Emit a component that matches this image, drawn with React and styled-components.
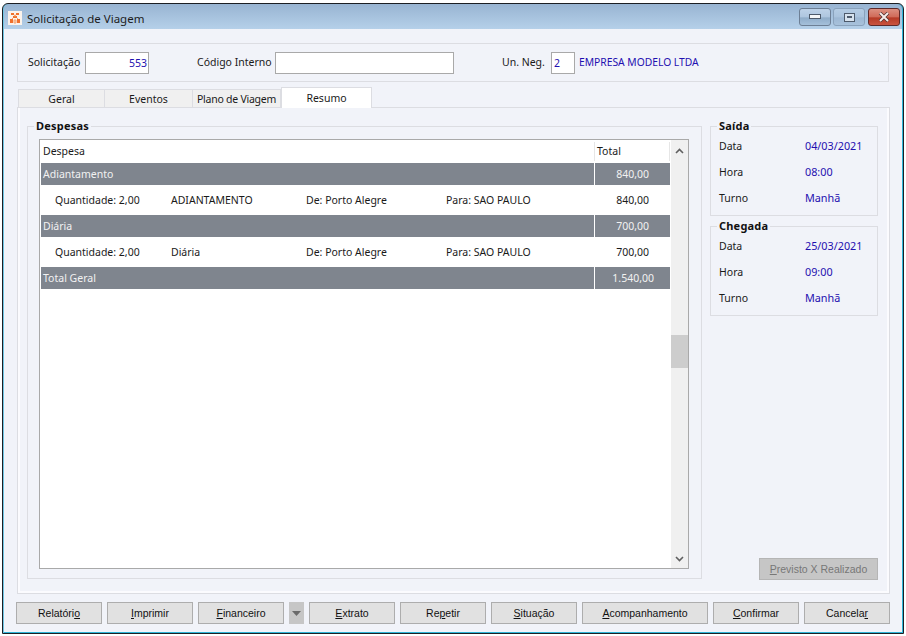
import React from 'react';
import styled, { createGlobalStyle } from 'styled-components';

const GlobalStyle = createGlobalStyle`
  html, body {
    margin: 0;
    padding: 0;
    background: #fff;
  }
  * {
    box-sizing: border-box;
  }
  #root {
    width: 906px;
    height: 636px;
    overflow: hidden;
    font-family: "Noto Sans", "Liberation Sans", sans-serif;
    font-size: 10.5px;
    color: #1a1a1a;
  }
`;

const Window = styled.div`
  width: 902px;
  height: 631px;
  margin: 3px 0 0 2px;
  border: 1px solid #1c1f24;
  border-radius: 6px 6px 0 0;
  background: linear-gradient(#98b4d2 0, #b6d1ea 26px, #bcd8ee 100%);
  padding: 0 1px 1px 1px;
  display: flex;
  flex-direction: column;
  box-shadow: inset 1px 0 0 #6fc6e4, inset -1px 0 0 #30b5d8, inset 0 -1px 0 #30b5d8;
`;

const TitleBar = styled.div`
  height: 25px;
  padding: 3px 2px 0 4px;
  display: flex;
  align-items: center;
  gap: 5px;
`;

const TitleIcon = styled.svg`
  width: 14px;
  height: 14px;
  flex: none;
`;

const TitleText = styled.div`
  font-size: 11.5px;
  color: #1c1c1c;
  flex: 1;
`;

const Controls = styled.div`
  display: flex;
  gap: 2px;
  align-self: flex-start;
  margin-top: 1px;
`;

const ControlButton = styled.div`
  width: 32px;
  height: 18px;
  margin-left: ${({ $close }) => ($close ? 1 : 0)}px;
  border: 1px solid ${({ $close, $soft }) => ($close ? '#5e2a2a' : $soft ? '#8aa2bc' : '#6d7f95')};
  border-radius: 3px;
  display: flex;
  align-items: center;
  justify-content: center;
  background: ${({ $close, $soft }) =>
    $close
      ? 'linear-gradient(#dc8f80 0, #d06a58 50%, #b53a26 55%, #c9533f 100%)'
      : $soft
        ? 'linear-gradient(#b4cce4 0, #aac3dd 50%, #9db8d4 55%, #a8c2dc 100%)'
        : 'linear-gradient(#bdd2e8 0, #aec6df 50%, #8facc9 55%, #a5c0da 100%)'};
`;

const Body = styled.div`
  flex: 1;
  background: #f1f3f9;
  padding: 14px 8px 8px 13px;
  display: flex;
  flex-direction: column;
`;

const HeaderGroup = styled.div`
  width: 872px;
  height: 39px;
  border: 1px solid #dcdde2;
  display: flex;
  align-items: center;
  padding-left: 10px;
`;

const FieldLabel = styled.span`
  width: ${({ $w }) => $w}px;
  margin: 0 0 2px ${({ $gap }) => $gap || 0}px;
  white-space: nowrap;
  flex: none;
`;

const Input = styled.div`
  width: ${({ $w }) => $w}px;
  height: 22px;
  background: #fff;
  border: 1px solid #a9a9a9;
  color: #1f10b0;
  padding: 0 1px 0 2px;
  line-height: 21px;
  text-align: ${({ $align }) => $align || 'left'};
  flex: none;
`;

const CompanyName = styled.span`
  margin: 0 0 2px 4px;
  color: #1f10b0;
  font-size: 10.3px;
`;

const TabRow = styled.div`
  height: 21px;
  margin: 5px 0 -1px 0;
  padding-left: 1px;
  display: flex;
  align-items: flex-start;
  position: relative;
  z-index: 1;
`;

const Tab = styled.div`
  width: ${({ $w }) => $w}px;
  height: ${({ $active }) => ($active ? 21 : 18)}px;
  margin-top: ${({ $active }) => ($active ? 0 : 2)}px;
  background: ${({ $active }) => ($active ? '#fff' : '#f0f0f0')};
  border: 1px solid #dcdde2;
  border-left-width: ${({ $first, $active }) => ($first || $active ? 1 : 0)}px;
  border-bottom-width: 0;
  display: flex;
  align-items: center;
  justify-content: center;
  padding-top: ${({ $active }) => ($active ? 0 : 1)}px;
  letter-spacing: ${({ $tight }) => ($tight ? '-0.25px' : '0')};
  white-space: nowrap;
`;

const TabPanel = styled.div`
  width: 873px;
  height: 487px;
  border: 1px solid #dcdde2;
  padding: 11px 9px 13px 9px;
  display: flex;
  gap: 8px;
  box-shadow: inset 2px 0 0 #fbfbfe, inset -2px 0 0 #fbfbfe, inset 0 -2px 0 #fbfbfe;
`;

const GroupBox = styled.fieldset`
  margin: 0;
  min-width: 0;
  width: ${({ $w }) => $w}px;
  height: ${({ $h }) => $h}px;
  border: 1px solid #dcdde2;
  padding: ${({ $pad }) => $pad};
  flex: none;
`;

const GroupLegend = styled.legend`
  margin-left: ${({ $offset }) => $offset}px;
  padding: 0 2px;
  font-weight: 700;
  font-size: 11px;
  letter-spacing: 0.2px;
  line-height: 14px;
  color: #111;
`;

const Grid = styled.div`
  height: 430px;
  background: #fff;
  border: 1px solid #a9a9a9;
  display: flex;
`;

const GridMain = styled.div`
  flex: 1;
  min-width: 0;
  padding: 0 1px;
`;

const HeaderRow = styled.div`
  height: 23px;
  display: grid;
  grid-template-columns: 553px 1fr;
  align-items: center;
`;

const HeaderCell = styled.div`
  height: 19px;
  line-height: 18px;
  padding-left: ${({ $pad }) => $pad}px;
  border-left: ${({ $sep }) => ($sep ? '1px solid #e6e6e6' : '0')};
  border-right: ${({ $sep }) => ($sep ? '1px solid #e6e6e6' : '0')};
`;

const BandRow = styled.div`
  height: 22px;
  display: grid;
  grid-template-columns: 553px 1px 1fr;
  line-height: 22px;
  color: #f2f2f2;
`;

const BandLabel = styled.div`
  background: #7f858e;
  padding-left: 2px;
`;

const BandDivider = styled.div`
  background: #fff;
`;

const BandValue = styled.div`
  background: #7f858e;
  text-align: right;
  padding-right: ${({ $pad }) => $pad || 21}px;
`;

const DetailRow = styled.div`
  height: 30px;
  display: grid;
  grid-template-columns: 116px 135px 140px 163px 1fr;
  align-items: center;
  padding-left: 14px;
`;

const DetailValue = styled.div`
  text-align: right;
  padding-right: 21px;
`;

const ScrollBar = styled.div`
  width: 17px;
  flex: none;
  background: #f0f0f0;
  display: flex;
  flex-direction: column;
  align-items: center;
`;

const ScrollArrow = styled.svg`
  width: 9px;
  height: 6px;
  margin: ${({ $m }) => $m};
  flex: none;
`;

const ScrollThumb = styled.div`
  width: 17px;
  height: 33px;
  margin-top: 181px;
  background: #cdcdcd;
`;

const ScrollSpacer = styled.div`
  flex: 1;
`;

const SideColumn = styled.div`
  flex: 1;
  display: flex;
  flex-direction: column;
`;

const InfoRow = styled.div`
  height: 26px;
  display: grid;
  grid-template-columns: 86px 1fr;
  align-items: center;
`;

const InfoValue = styled.span`
  color: #1f10b0;
  font-size: 10.8px;
  margin-bottom: 1px;
`;

const Stack = styled.div`
  display: flex;
  flex-direction: column;
  gap: 3px;
`;

const SideButton = styled.div`
  width: 119px;
  height: 22px;
  margin: auto 0 0 49px;
  background: #c6c6c6;
  border: 1px solid #b5b5b5;
  color: #777;
  font-family: "Liberation Sans", sans-serif;
  font-size: 10.5px;
  text-align: center;
  line-height: 20px;
  white-space: nowrap;
`;

const Footer = styled.div`
  margin: 8px 0 0 -1px;
  display: flex;
  gap: 5px;
`;

const ActionButton = styled.div`
  width: ${({ $w }) => $w || 86}px;
  height: 22px;
  background: #e1e1e1;
  border: 1px solid #adadad;
  font-family: "Liberation Sans", sans-serif;
  font-size: 10.5px;
  text-align: center;
  line-height: 20px;
  white-space: nowrap;
  color: #111;
  flex: none;
`;

const DropButton = styled.div`
  width: 15px;
  height: 22px;
  background: #c6c6c6;
  display: flex;
  align-items: center;
  justify-content: center;
  flex: none;
`;

const Key = styled.span`
  text-decoration: underline;
`;

const Triangle = styled.svg`
  width: 9px;
  height: 5px;
`;

const groups = [
  { name: 'Adiantamento', total: '840,00', detail: 'ADIANTAMENTO' },
  { name: 'Diária', total: '700,00', detail: 'Diária' },
];

const schedule = [
  { title: 'Saída', date: '04/03/2021', time: '08:00', shift: 'Manhã' },
  { title: 'Chegada', date: '25/03/2021', time: '09:00', shift: 'Manhã' },
];

const buttons = [
  { pre: 'Relatóri', key: 'o', post: '' },
  { pre: '', key: 'I', post: 'mprimir' },
  { pre: '', key: 'F', post: 'inanceiro' },
  { drop: true },
  { pre: '', key: 'E', post: 'xtrato' },
  { pre: 'Re', key: 'p', post: 'etir' },
  { pre: '', key: 'S', post: 'ituação' },
  { pre: '', key: 'A', post: 'companhamento', w: 126 },
  { pre: '', key: 'C', post: 'onfirmar' },
  { pre: 'Cancela', key: 'r', post: '' },
];

const AppIcon = () => (
  <TitleIcon viewBox="0 0 14 14">
    <rect width="14" height="14" fill="#fbf3ec" />
    <path d="M3 2h3v2H3zM8 2h3v2H8zM5 5h4v2H5zM2 8h3v4H2zM9 8h3v4H9z" fill="#f0702c" />
    <path d="M6 4l2 1M8 4L6 5M5 7L4 8M9 7l1 1M6 9h2v3H6z" stroke="#f6a472" strokeWidth="1" fill="#fbd2b4" />
  </TitleIcon>
);

export default function App() {
  return (
    <>
      <GlobalStyle />
      <Window>
        <TitleBar>
          <AppIcon />
          <TitleText>Solicitação de Viagem</TitleText>
          <Controls>
            <ControlButton>
              <svg width="12" height="6" viewBox="0 0 12 6">
                <rect x="0.5" y="0.5" width="11" height="4" fill="#f4f6f8" stroke="#4d5a6b" />
              </svg>
            </ControlButton>
            <ControlButton $soft>
              <svg width="11" height="9" viewBox="0 0 11 9">
                <rect x="0.5" y="0.5" width="10" height="8" fill="#d6e2ee" stroke="#4d5a6b" />
                <rect x="3" y="3" width="5" height="2" fill="#4d5a6b" />
              </svg>
            </ControlButton>
            <ControlButton $close>
              <svg width="12" height="10" viewBox="0 0 12 10">
                <path d="M2 1l8 8M10 1L2 9" stroke="#4a3030" strokeWidth="3.4" />
                <path d="M2 1l8 8M10 1L2 9" stroke="#f6ecea" strokeWidth="2" />
              </svg>
            </ControlButton>
          </Controls>
        </TitleBar>
        <Body>
          <HeaderGroup>
            <FieldLabel $w={57}>Solicitação</FieldLabel>
            <Input $w={64} $align="right">553</Input>
            <FieldLabel $w={78} $gap={48}>Código Interno</FieldLabel>
            <Input $w={179} />
            <FieldLabel $w={49} $gap={48}>Un. Neg.</FieldLabel>
            <Input $w={24}>2</Input>
            <CompanyName>EMPRESA MODELO LTDA</CompanyName>
          </HeaderGroup>
          <TabRow>
            <Tab $w={87} $first>Geral</Tab>
            <Tab $w={88}>Eventos</Tab>
            <Tab $w={88} $tight>Plano de Viagem</Tab>
            <Tab $w={91} $active>Resumo</Tab>
          </TabRow>
          <TabPanel>
            <GroupBox $w={675} $h={460} $pad="6px 12px 0 11px">
              <GroupLegend $offset={-5}>Despesas</GroupLegend>
              <Grid>
                <GridMain>
                  <HeaderRow>
                    <HeaderCell $pad={2}>Despesa</HeaderCell>
                    <HeaderCell $pad={2} $sep>Total</HeaderCell>
                  </HeaderRow>
                  {groups.map((g) => (
                    <React.Fragment key={g.name}>
                      <BandRow>
                        <BandLabel>{g.name}</BandLabel>
                        <BandDivider />
                        <BandValue>{g.total}</BandValue>
                      </BandRow>
                      <DetailRow>
                        <span>Quantidade: 2,00</span>
                        <span>{g.detail}</span>
                        <span>De: Porto Alegre</span>
                        <span>Para: SAO PAULO</span>
                        <DetailValue>{g.total}</DetailValue>
                      </DetailRow>
                    </React.Fragment>
                  ))}
                  <BandRow>
                    <BandLabel>Total Geral</BandLabel>
                    <BandDivider />
                    <BandValue $pad={16}>1.540,00</BandValue>
                  </BandRow>
                </GridMain>
                <ScrollBar>
                  <ScrollArrow viewBox="0 0 9 6" $m="8px 0 0 0">
                    <path d="M1 5l3.500-3.500L8 5" fill="none" stroke="#606060" strokeWidth="1.6" />
                  </ScrollArrow>
                  <ScrollThumb />
                  <ScrollSpacer />
                  <ScrollArrow viewBox="0 0 9 6" $m="0 0 6px 0">
                    <path d="M1 1l3.500 3.500L8 1" fill="none" stroke="#606060" strokeWidth="1.6" />
                  </ScrollArrow>
                </ScrollBar>
              </Grid>
            </GroupBox>
            <SideColumn>
              <Stack>
                {schedule.map((s) => (
                  <GroupBox key={s.title} $w={168} $h={97} $pad="0 8px">
                    <GroupLegend $offset={-2}>{s.title}</GroupLegend>
                    <InfoRow>
                      <span>Data</span>
                      <InfoValue>{s.date}</InfoValue>
                    </InfoRow>
                    <InfoRow>
                      <span>Hora</span>
                      <InfoValue>{s.time}</InfoValue>
                    </InfoRow>
                    <InfoRow>
                      <span>Turno</span>
                      <InfoValue>{s.shift}</InfoValue>
                    </InfoRow>
                  </GroupBox>
                ))}
              </Stack>
              <SideButton><Key>P</Key>revisto X Realizado</SideButton>
            </SideColumn>
          </TabPanel>
          <Footer>
            {buttons.map((b, i) =>
              b.drop ? (
                <DropButton key={i}>
                  <Triangle viewBox="0 0 9 5"><path d="M0 0h9L4.500 5z" fill="#6a6a6a" /></Triangle>
                </DropButton>
              ) : (
                <ActionButton key={i} $w={b.w}>
                  {b.pre}<Key>{b.key}</Key>{b.post}
                </ActionButton>
              )
            )}
          </Footer>
        </Body>
      </Window>
    </>
  );
}
